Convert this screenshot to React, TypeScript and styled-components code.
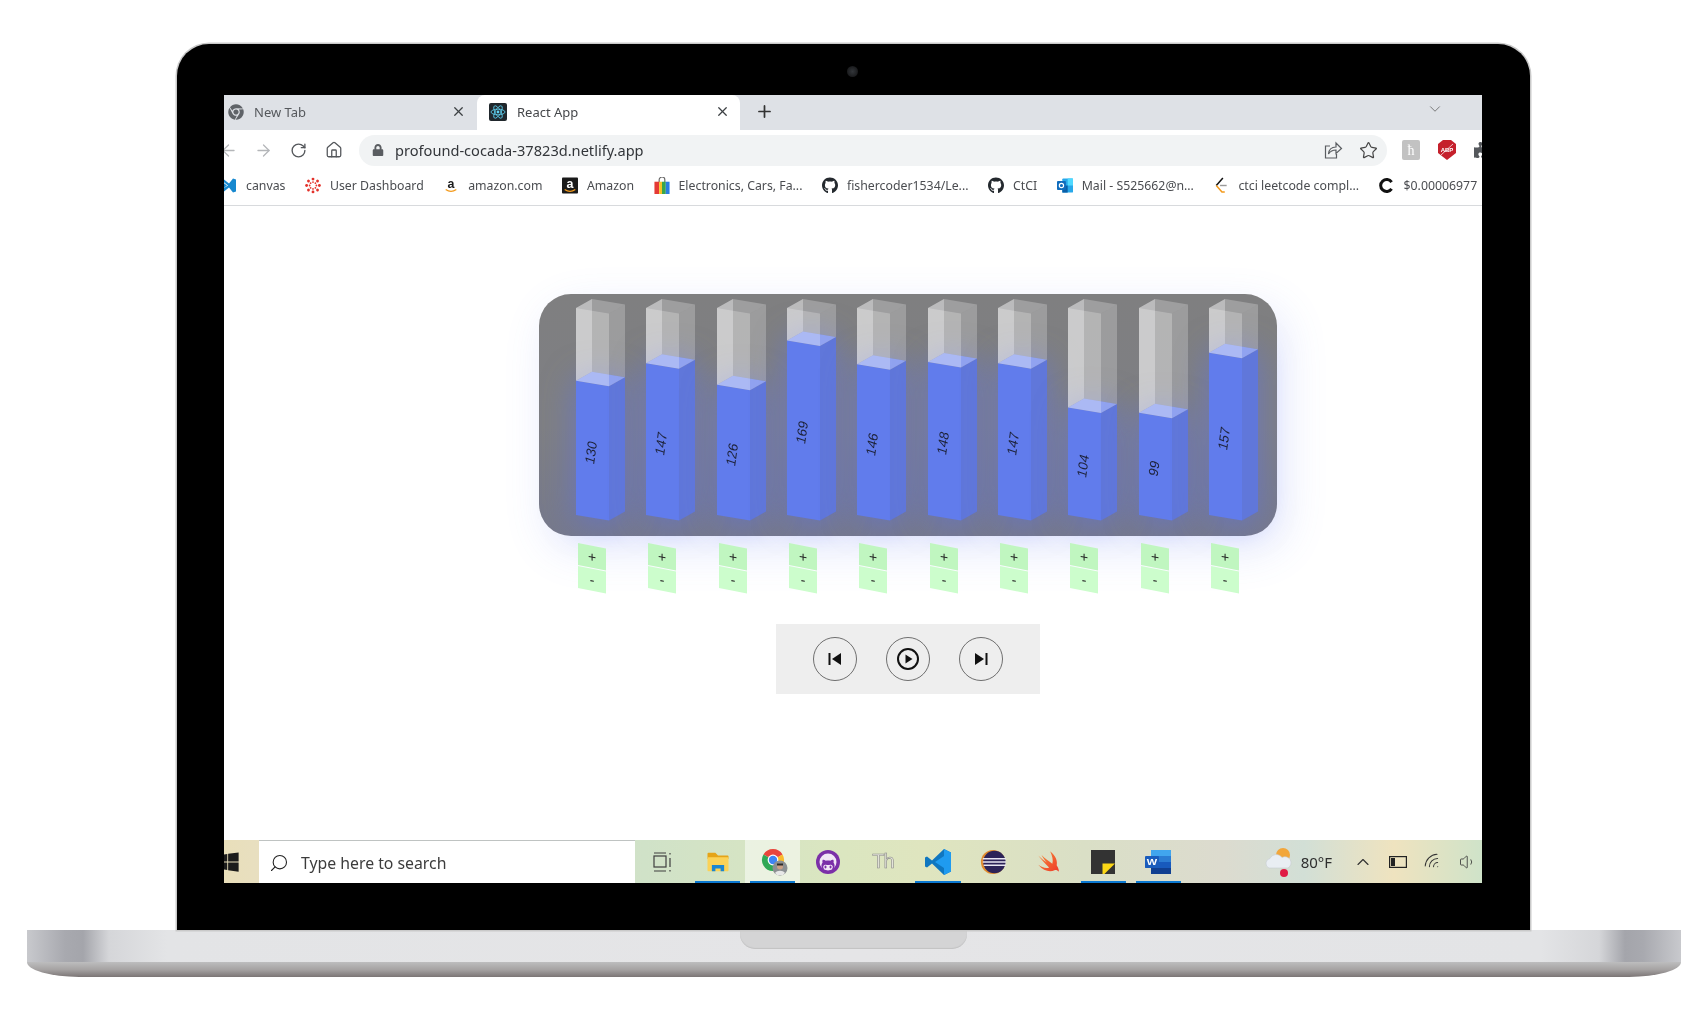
import React from "react";
import styled, { createGlobalStyle } from "styled-components";
import { ArrowLeft, ArrowRight, ChevronDown, ChevronUp, House, Plus, RotateCw, Search, Star, Volume1, Wifi, X } from "lucide-react";
import { FaChrome, FaGithub, FaGithubAlt, FaLock, FaPuzzlePiece, FaWindows } from "react-icons/fa";

const UI_FONT = `"Noto Sans", "Open Sans", sans-serif`;

const GlobalStyle = createGlobalStyle`
  html, body { margin: 0; padding: 0; background: #fff; }
  body { font-family: ${UI_FONT}; overflow: hidden; }
`;

const VALUES = [130, 147, 126, 169, 146, 148, 147, 104, 99, 157];

/* ---------- laptop ---------- */
const Page = styled.div`
  width: 1704px;
  height: 1025px;
  padding: 44px 0 0 3px;
  box-sizing: border-box;
  display: flex;
  flex-direction: column;
  align-items: center;
`;

const Lid = styled.div`
  position: relative;
  width: 1353px;
  height: 886px;
  box-sizing: border-box;
  padding: 51px 48px 47px 47px;
  background: #000;
  border-radius: 32px 32px 0 0;
  box-shadow: 0 0 0 1.5px #c9c9c9;
`;

const Camera = styled.div`
  position: absolute;
  left: 670px;
  top: 22px;
  width: 11px;
  height: 11px;
  border-radius: 50%;
  background: radial-gradient(circle at 50% 50%, #33363a, #1a1b1d 70%);
`;

const Screen = styled.div`
  width: 1258px;
  height: 788px;
  display: flex;
  flex-direction: column;
  overflow: hidden;
  background: #fff;
  filter: blur(0.35px);
`;

const Base = styled.div`
  width: 1654px;
  height: 47px;
  display: flex;
  flex-direction: column;
`;

const BaseTop = styled.div`
  height: 32px;
  display: flex;
  justify-content: center;
  background: linear-gradient(
    90deg,
    #c8c9cd 0,
    #a8a9af 38px,
    #a4a5ab 56px,
    #d5d6d9 82px,
    #e3e4e6 140px,
    #e5e5e7 50%,
    #e3e4e6 calc(100% - 140px),
    #d5d6d9 calc(100% - 82px),
    #a4a5ab calc(100% - 56px),
    #a8a9af calc(100% - 38px),
    #c8c9cd 100%
  );
`;

const Notch = styled.div`
  width: 227px;
  height: 19px;
  border-radius: 0 0 15px 15px;
  background: #d4d4d5;
  box-shadow: inset 0 -1px 1px #c2c2c3;
`;

const BaseBottom = styled.div`
  height: 15px;
  border-radius: 0 0 52px 52px / 0 0 15px 15px;
  background: linear-gradient(180deg, #bdbdbe 0, #a6a3a3 50%, #7b7575 100%);
`;

/* ---------- browser chrome ---------- */
const TabBar = styled.div`
  height: 35px;
  flex: none;
  display: flex;
  align-items: stretch;
  background: #dee1e6;
`;

const Tab = styled.div<{ $active?: boolean; $width: number; $inset: number }>`
  width: ${(p) => p.$width}px;
  box-sizing: border-box;
  padding: 0 10px 2px ${(p) => p.$inset}px;
  display: flex;
  align-items: center;
  gap: 10px;
  font-size: 13px;
  color: ${(p) => (p.$active ? "#45474a" : "#55585c")};
  background: ${(p) => (p.$active ? "#fff" : "transparent")};
  border-radius: 8px 8px 0 0;
  svg:last-child { margin-left: auto; }
`;

const NewTabButton = styled.div`
  width: 48px;
  display: flex;
  align-items: center;
  justify-content: center;
  color: #333;
  padding-bottom: 2px;
`;

const WindowChevron = styled.div`
  margin-left: auto;
  margin-right: 38px;
  padding-top: 5px;
  color: #555;
`;

const Toolbar = styled.div`
  height: 41px;
  box-sizing: border-box;
  padding-bottom: 1px;
  flex: none;
  display: flex;
  align-items: center;
  background: #fff;
`;

const NavSlot = styled.div<{ $faded?: boolean }>`
  width: 35px;
  flex: none;
  display: flex;
  justify-content: center;
  color: ${(p) => (p.$faded ? "#b4b6b9" : "#54575b")};
  &:first-child { margin-left: -13px; }
`;

const Omnibox = styled.div`
  width: 1028px;
  height: 31px;
  margin: 0 6px 0 8px;
  box-sizing: border-box;
  padding: 0 9px 0 13px;
  flex: none;
  display: flex;
  align-items: center;
  border-radius: 16px;
  background: #f1f3f4;
  color: #5a5d61;
`;

const Url = styled.span`
  margin-left: 11px;
  font-size: 14.6px;
  color: #33363a;
`;

const OmniActions = styled.div`
  margin-left: auto;
  display: flex;
  align-items: center;
  gap: 16px;
`;

const ExtensionSlot = styled.div`
  width: 36px;
  flex: none;
  display: flex;
  justify-content: center;
`;

const Bookmarks = styled.div`
  height: 34px;
  box-sizing: border-box;
  padding-bottom: 6px;
  flex: none;
  display: flex;
  align-items: center;
  gap: 19.5px;
  margin-left: -3px;
  white-space: nowrap;
`;

const BookmarkBarWrap = styled.div`
  flex: none;
  background: #fff;
  border-bottom: 1px solid #d8dadd;
  overflow: hidden;
`;

const Bookmark = styled.div`
  display: flex;
  align-items: center;
  gap: 9px;
  font-size: 12.3px;
  color: #4a4c50;
  svg { flex: none; width: 16px; height: 17px; }
`;

/* ---------- app under the browser ---------- */
const Content = styled.div`
  flex: 1;
  min-height: 0;
  padding: 88px 0 0 315px;
  background: #fff;
`;

const Stage = styled.div`
  width: 738px;
  display: flex;
  flex-direction: column;
`;

const Panel = styled.div`
  height: 242px;
  box-sizing: border-box;
  padding: 4px 0 0 37px;
  display: flex;
  border-radius: 32px;
  background: linear-gradient(180deg, #7f7f80 0, #7e7f84 55%, #76798c 100%);
  box-shadow: 8px 14px 44px rgba(96, 118, 240, 0.16);
`;

const BarSlot = styled.div`
  width: 70.33px;
  flex: none;
`;

const BarSvg = styled.svg`
  display: block;
  overflow: visible;
`;

const Liquid = styled.g`
  filter: drop-shadow(0 4px 16px rgba(86, 110, 250, 0.5));
`;

const BarLabel = styled.text`
  font-family: "Liberation Sans", Arial, sans-serif;
  font-size: 13.5px;
  fill: #1d2238;
`;

const StepperRow = styled.div`
  display: flex;
  padding: 7px 0 0 39px;
`;

const Stepper = styled.div`
  width: 70.33px;
  flex: none;
  display: flex;
  flex-direction: column;
  gap: 1px;
`;

const StepButton = styled.div<{ $tone: string }>`
  width: 28px;
  height: 22px;
  display: flex;
  align-items: center;
  justify-content: center;
  font-family: "Liberation Sans", Arial, sans-serif;
  font-size: 14px;
  color: #222;
  background: ${(p) => p.$tone};
  transform-origin: 0 0;
  transform: skewY(11deg);
`;

const Controls = styled.div`
  width: 264px;
  height: 70px;
  margin-top: 36px;
  align-self: center;
  display: flex;
  align-items: center;
  justify-content: center;
  gap: 29px;
  background: #eee;
`;

const RoundButton = styled.div`
  width: 44px;
  height: 44px;
  box-sizing: border-box;
  display: flex;
  align-items: center;
  justify-content: center;
  border: 1px solid #6f6f6f;
  border-radius: 50%;
`;

/* ---------- taskbar ---------- */
const Taskbar = styled.div`
  height: 43px;
  flex: none;
  display: flex;
  align-items: stretch;
  background: linear-gradient(
    90deg,
    #e9dfba 0,
    #e8dfc0 34px,
    #d0e2c8 420px,
    #dbe6c0 620px,
    #dfe5bf 700px,
    #dadfc6 860px,
    #dcdbcf 1000px,
    #d2dfd6 1080px,
    #efe3bf 1170px,
    #cfe3c9 1258px
  );
`;

const StartSlot = styled.div`
  width: 35px;
  flex: none;
  display: flex;
  align-items: center;
  color: #1c1c1c;
  svg { margin-left: -6px; }
`;

const SearchBox = styled.div`
  width: 376px;
  flex: none;
  box-sizing: border-box;
  padding: 2px 0 0 10px;
  display: flex;
  align-items: center;
  gap: 12px;
  background: #fff;
  border-top: 1px solid #bfc3c2;
  font-size: 15.8px;
  color: #3c3c3c;
  svg { transform: scaleX(-1); }
`;

const TaskIcon = styled.div<{ $running?: boolean; $focused?: boolean }>`
  position: relative;
  width: 55.1px;
  flex: none;
  display: flex;
  align-items: center;
  justify-content: center;
  background: ${(p) => (p.$focused ? "rgba(255,255,255,.5)" : "transparent")};
  ${(p) =>
    p.$running
      ? `&::after {
          content: "";
          position: absolute;
          left: 5px;
          right: 5px;
          bottom: 0;
          height: 2px;
          background: #0b78d0;
        }`
      : ""}
`;

const ThGlyph = styled.span`
  font-family: "Liberation Sans", sans-serif;
  font-size: 20px;
  letter-spacing: -1px;
  color: #e4e4da;
  -webkit-text-stroke: 0.6px #8a8a88;
`;

const Tray = styled.div`
  margin-left: auto;
  margin-right: -3px;
  display: flex;
  align-items: center;
`;

const TrayTemp = styled.span`
  margin: 0 13px 0 7px;
  font-size: 15px;
  color: #2e2e2e;
`;

const TrayIcon = styled.div`
  width: 35px;
  display: flex;
  justify-content: center;
  color: #333;
`;

/* ---------- drawn icons ---------- */
const ReactLogo = () => (
  <svg width="18" height="18" viewBox="0 0 18 18">
    <rect width="18" height="18" rx="2" fill="#20272c" />
    <g fill="none" stroke="#5fd3f3" strokeWidth=".8">
      <ellipse cx="9" cy="9" rx="7" ry="2.8" />
      <ellipse cx="9" cy="9" rx="7" ry="2.8" transform="rotate(60 9 9)" />
      <ellipse cx="9" cy="9" rx="7" ry="2.8" transform="rotate(120 9 9)" />
    </g>
    <circle cx="9" cy="9" r="1.4" fill="#5fd3f3" />
  </svg>
);

const CanvasMark = () => (
  <svg width="16" height="16" viewBox="0 0 16 16">
    <path d="M2 5l4 3-4 3zM3 2l5 4 4-5 3 1v12l-3 1-4-5-5 4-1-3 5-3-5-4z" fill="#1688cf" />
  </svg>
);

const RING_DOTS = [0, 45, 90, 135, 180, 225, 270, 315];

const DashboardMark = () => (
  <svg width="18" height="18" viewBox="0 0 18 18">
    {RING_DOTS.map((deg) => (
      <g key={deg} transform={`rotate(${deg} 9 9)`}>
        <circle cx="9" cy="1.8" r="1.6" fill="#e3322b" />
        <circle cx="9" cy="5.2" r="1" fill="#e3322b" />
      </g>
    ))}
  </svg>
);

const AmazonMark = ({ boxed }: { boxed?: boolean }) => (
  <svg width="18" height="18" viewBox="0 0 18 18">
    {boxed && <rect width="18" height="18" rx="1" fill="#1a1a1a" />}
    <text x="9" y="12" textAnchor="middle" fontSize="14" fontWeight="700" fontFamily="Liberation Sans" fill={boxed ? "#fff" : "#1a1a1a"}>
      a
    </text>
    <path d="M3 13.5c3.5 2.4 8.5 2.4 12 0" fill="none" stroke="#f39a1c" strokeWidth="1.5" />
  </svg>
);

const BagMark = () => (
  <svg width="16" height="18" viewBox="0 0 16 18">
    <path d="M5 6V3a3 3 0 0 1 6 0v3" fill="none" stroke="#666" strokeWidth="1.2" />
    <rect x="0" y="5" width="5" height="13" fill="#e53a35" />
    <rect x="5" y="5" width="3" height="13" fill="#f7c325" />
    <rect x="8" y="5" width="4" height="13" fill="#3aa64a" />
    <rect x="12" y="5" width="4" height="13" fill="#2a7de1" />
  </svg>
);

const OutlookMark = () => (
  <svg width="18" height="16" viewBox="0 0 18 16">
    <rect x="6" y="0" width="12" height="16" rx="1" fill="#28a8ea" />
    <rect x="12" y="0" width="6" height="8" fill="#50d9ff" />
    <rect x="6" y="8" width="6" height="8" fill="#0a5fa8" />
    <rect x="0" y="3" width="10" height="10" rx="1" fill="#0f6cbd" />
    <circle cx="5" cy="8" r="2.4" fill="none" stroke="#fff" strokeWidth="1.3" />
  </svg>
);

const LeetMark = () => (
  <svg width="16" height="18" viewBox="0 0 16 18">
    <path d="M10 1L3 9" fill="none" stroke="#111" strokeWidth="1.6" />
    <path d="M3 9l6 7h3" fill="none" stroke="#f39a1c" strokeWidth="1.6" />
    <path d="M7 9h7" stroke="#9a9a9a" strokeWidth="1.5" />
  </svg>
);

const CoinMark = () => (
  <svg width="16" height="16" viewBox="0 0 16 16">
    <path d="M12.6 4.6a6 6 0 1 0 0 6.8" fill="none" stroke="#111" strokeWidth="3" />
  </svg>
);

const ShareIcon = () => (
  <svg width="20" height="20" viewBox="0 0 20 20" fill="none" stroke="#5a5d61" strokeWidth="1.2">
    <path d="M7 6H2.5v12h11v-4" />
    <path d="M5.5 14c.4-4.4 3.4-7 7.5-7V3l5.5 5.5L13 13.5V10c-3 0-5.600 1-7.500 4z" />
  </svg>
);

const HistoryExtension = () => (
  <svg width="18" height="20" viewBox="0 0 18 20">
    <rect width="18" height="20" rx="2" fill="#c2c2c2" />
    <text x="9" y="15" textAnchor="middle" fontSize="14" fontFamily="Liberation Serif" fill="#fff">
      ћ
    </text>
  </svg>
);

const AdblockExtension = () => (
  <svg width="18" height="20" viewBox="0 0 18 20">
    <path d="M5 0h8l5 4v9l-9 7-9-7V4z" fill="#c5202c" />
    <text x="9" y="12" textAnchor="middle" fontSize="6" fontWeight="700" fontFamily="Liberation Sans" fill="#fff">
      ABP
    </text>
    <path d="M3 15L15 4" stroke="#fff" strokeWidth=".7" />
  </svg>
);

const TaskViewIcon = () => (
  <svg width="20" height="22" viewBox="0 0 20 22" fill="none" stroke="#3e3e3e" strokeWidth="1.2">
    <rect x="1" y="5" width="12" height="11" />
    <path d="M1 2h12M1 20h12M17 2v1.500M17 7v9M17 19v1.500" />
  </svg>
);

const ExplorerIcon = () => (
  <svg width="24" height="21" viewBox="0 0 26 24">
    <path d="M1 3a1 1 0 0 1 1-1h8l3 3h11a1 1 0 0 1 1 1v3H1z" fill="#e5a418" />
    <rect x="1" y="7" width="24" height="16" rx="1" fill="#fbd257" />
    <path d="M6 23v-7h14v7h-4v-3h-6v3z" fill="#1c86d1" />
  </svg>
);

const ChromeIcon = () => (
  <svg width="28" height="28" viewBox="0 0 28 28" style={{ marginLeft: 4 }}>
    <path d="M12 12L2.470 6.500A11 11 0 0 1 21.530 6.500Z" fill="#e8453c" />
    <path d="M12 12L21.530 6.500A11 11 0 0 1 12 23Z" fill="#f9bb2d" />
    <path d="M12 12L12 23A11 11 0 0 1 2.470 6.500Z" fill="#2fa855" />
    <circle cx="12" cy="12" r="5.400" fill="#fff" />
    <circle cx="12" cy="12" r="4.200" fill="#3f85f3" />
    <circle cx="19" cy="20" r="7.500" fill="#8b8f92" />
    <circle cx="19" cy="18.500" r="3" fill="#caa086" />
    <path d="M16 15.500h6v2h-6z" fill="#2c2a2a" />
    <path d="M14 25c2-3 8-3 10 0l-2 2h-6z" fill="#e8e8e8" />
  </svg>
);

const GithubDesktopIcon = () => (
  <svg width="26" height="26" viewBox="0 0 26 26">
    <circle cx="13" cy="13" r="12" fill="#7b2fa8" />
    <circle cx="13" cy="13" r="8.500" fill="#f2e6f6" />
    <foreignObject x="6" y="6" width="14" height="14">
      <FaGithubAlt size={14} color="#7b2fa8" />
    </foreignObject>
  </svg>
);

const VsCodeIcon = () => (
  <svg width="28" height="28" viewBox="0 0 28 28">
    <path d="M20 1l7 3.500v19L20 27 8 15.500 3 19.500 1 18.500v-9l2-1 5 4z" fill="#0f76c0" />
    <path d="M20 1l7 3.500v19L20 27zM20 8l-9 6 9 6z" fill="#1f9bf0" fillRule="evenodd" />
  </svg>
);

const EclipseIcon = () => (
  <svg width="26" height="26" viewBox="0 0 28 28">
    <circle cx="14" cy="14" r="13" fill="#e08a2e" />
    <circle cx="15.500" cy="14" r="12" fill="#2c2358" />
    <path d="M3 10.500h25M3 14h25M4 17.500h24" stroke="#e8e6f2" strokeWidth="1.600" />
  </svg>
);

const SwiftIcon = () => (
  <svg width="28" height="26" viewBox="0 0 24 24">
    <defs>
      <linearGradient id="swiftFill" x1="0" y1="0" x2="1" y2="1">
        <stop offset="0" stopColor="#f88a36" />
        <stop offset="1" stopColor="#ee3b2b" />
      </linearGradient>
    </defs>
    <path d="M14 2c5 4 7 9 6 13 2 3 2 5 2 6-1-1.500-3-2-4-1.500-4 2-10 1-15-5 3 2 7 4 10 2.500C9 13 5 9 3 6c3 3 6 5 8 6.500-2-2-4-5-5-7 3 3 7 6 10 8 1-3 0-7-2-11.500z" fill="url(#swiftFill)" />
  </svg>
);

const StickyIcon = () => (
  <svg width="24" height="24" viewBox="0 0 25 25">
    <rect width="25" height="25" fill="#333" />
    <path d="M12 25V14h13L14 25z" fill="#fbd716" />
  </svg>
);

const WordIcon = () => (
  <svg width="26" height="24" viewBox="0 0 26 28" preserveAspectRatio="none">
    <rect x="6" y="0" width="20" height="7" fill="#41a5ee" />
    <rect x="6" y="7" width="20" height="7" fill="#2b7cd3" />
    <rect x="6" y="14" width="20" height="7" fill="#185abd" />
    <rect x="6" y="21" width="20" height="7" fill="#103f91" />
    <rect x="0" y="7" width="14" height="14" rx="1" fill="#1a5cbc" />
    <text x="7" y="18" textAnchor="middle" fontSize="11" fontWeight="700" fontFamily="Liberation Sans" fill="#fff">
      W
    </text>
  </svg>
);

const WeatherIcon = () => (
  <svg width="30" height="32" viewBox="0 0 30 32">
    <circle cx="19" cy="9" r="7" fill="#f2a63a" />
    <path d="M5 22a5 5 0 0 1 1-9.500 7 7 0 0 1 12-1 6 6 0 0 1 6 10.500z" fill="#e9eef3" stroke="#c7ccd2" strokeWidth=".6" />
    <circle cx="20" cy="27" r="4" fill="#e01b45" />
  </svg>
);

const BatteryIcon = () => (
  <svg width="18" height="12" viewBox="0 0 18 12">
    <rect x=".6" y=".6" width="16.800" height="10.800" fill="none" stroke="#222" strokeWidth="1.200" />
    <rect x="2" y="2" width="4" height="8" fill="#222" />
  </svg>
);

const SkipBack = () => (
  <svg width="16" height="16" viewBox="0 0 16 16">
    <rect x="1.500" y="2" width="2" height="12" fill="#111" />
    <path d="M14 2v12L5 8z" fill="#111" />
  </svg>
);

const SkipForward = () => (
  <svg width="16" height="16" viewBox="0 0 16 16">
    <rect x="12.500" y="2" width="2" height="12" fill="#111" />
    <path d="M2 2v12l9-6z" fill="#111" />
  </svg>
);

const PlayCircle = () => (
  <svg width="24" height="24" viewBox="0 0 24 24">
    <circle cx="12" cy="12" r="10" fill="none" stroke="#111" strokeWidth="2" />
    <path d="M9.500 7.500v9l7-4.500z" fill="#111" />
  </svg>
);

/* ---------- 3d bar ---------- */
const FRONT_W = 33;
const SIDE_X = 16;
const SIDE_Y = 9;
const SHEAR = 5.5;
const GLASS_TOP = 10;
const FLOOR = 217;

const pts = (list: number[][]) => list.map((p) => p.join(",")).join(" ");
const front = (a: number, b: number) =>
  pts([[0, a], [FRONT_W, a + SHEAR], [FRONT_W, b + SHEAR], [0, b]]);
const right = (a: number, b: number) =>
  pts([
    [FRONT_W, a + SHEAR],
    [FRONT_W + SIDE_X, a + SHEAR - SIDE_Y],
    [FRONT_W + SIDE_X, b + SHEAR - SIDE_Y],
    [FRONT_W, b + SHEAR],
  ]);
const left = (a: number, b: number) =>
  pts([[0, a], [SIDE_X, a - SIDE_Y], [SIDE_X, b - SIDE_Y], [0, b]]);
const lid = (y: number) =>
  pts([[0, y], [FRONT_W, y + SHEAR], [FRONT_W + SIDE_X, y + SHEAR - SIDE_Y], [SIDE_X, y - SIDE_Y]]);

function Bar({ value }: { value: number }) {
  const level = FLOOR - value * 1.033;
  const labelY = (level + FLOOR) / 2 + 6;
  return (
    <BarSvg width="50" height="226" viewBox="0 0 50 226">
      <polygon points={pts([[SIDE_X, GLASS_TOP - SIDE_Y], [FRONT_W + SIDE_X, GLASS_TOP + SHEAR - SIDE_Y], [FRONT_W + SIDE_X, level + SHEAR - SIDE_Y], [SIDE_X, level - SIDE_Y]])} fill="rgba(255,255,255,.1)" />
      <polygon points={left(GLASS_TOP, level)} fill="rgba(255,255,255,.38)" />
      <Liquid>
        <polygon points={front(level, FLOOR)} fill="#617cec" />
        <polygon points={right(level, FLOOR)} fill="#6077da" />
        <polygon points={lid(level)} fill="#7f94ee" />
      </Liquid>
      <polygon points={front(GLASS_TOP, level)} fill="rgba(255,255,255,.35)" />
      <polygon points={right(GLASS_TOP, level)} fill="rgba(255,255,255,.14)" />
      <polygon points={lid(GLASS_TOP)} fill="rgba(255,255,255,.16)" />
      <BarLabel textAnchor="middle" transform={`translate(19.500 ${labelY}) rotate(-82) skewX(-10)`}>
        {value}
      </BarLabel>
    </BarSvg>
  );
}

const BOOKMARKS: { label: string; icon: React.ReactNode }[] = [
  { label: "canvas", icon: <CanvasMark /> },
  { label: "User Dashboard", icon: <DashboardMark /> },
  { label: "amazon.com", icon: <AmazonMark /> },
  { label: "Amazon", icon: <AmazonMark boxed /> },
  { label: "Electronics, Cars, Fa...", icon: <BagMark /> },
  { label: "fishercoder1534/Le...", icon: <FaGithub color="#24292e" /> },
  { label: "CtCI", icon: <FaGithub color="#24292e" /> },
  { label: "Mail - S525662@n...", icon: <OutlookMark /> },
  { label: "ctci leetcode compl...", icon: <LeetMark /> },
  { label: "$0.00006977", icon: <CoinMark /> },
];

export default function App() {
  return (
    <Page>
      <GlobalStyle />
      <Lid>
        <Camera />
        <Screen>
          <TabBar>
            <Tab $width={253} $inset={4}>
              <FaChrome size={16} color="#5f6368" />
              <span>New Tab</span>
              <X size={15} color="#3c4043" style={{ marginRight: 1 }} />
            </Tab>
            <Tab $active $width={263} $inset={12}>
              <ReactLogo />
              <span>React App</span>
              <X size={15} color="#3c4043" />
            </Tab>
            <NewTabButton>
              <Plus size={19} strokeWidth={2.2} />
            </NewTabButton>
            <WindowChevron>
              <ChevronDown size={18} strokeWidth={1} />
            </WindowChevron>
          </TabBar>

          <Toolbar>
            <NavSlot $faded>
              <ArrowLeft size={19} strokeWidth={1.6} />
            </NavSlot>
            <NavSlot $faded>
              <ArrowRight size={19} strokeWidth={1.6} />
            </NavSlot>
            <NavSlot>
              <RotateCw size={17} strokeWidth={1.9} />
            </NavSlot>
            <NavSlot>
              <House size={18} strokeWidth={1.7} />
            </NavSlot>
            <Omnibox>
              <FaLock size={12} />
              <Url>profound-cocada-37823d.netlify.app</Url>
              <OmniActions>
                <ShareIcon />
                <Star size={19} strokeWidth={1.5} color="#444" />
              </OmniActions>
            </Omnibox>
            <ExtensionSlot>
              <HistoryExtension />
            </ExtensionSlot>
            <ExtensionSlot>
              <AdblockExtension />
            </ExtensionSlot>
            <ExtensionSlot>
              <FaPuzzlePiece size={18} color="#55585c" />
            </ExtensionSlot>
          </Toolbar>

          <BookmarkBarWrap>
            <Bookmarks>
              {BOOKMARKS.map((b) => (
                <Bookmark key={b.label}>
                  {b.icon}
                  <span>{b.label}</span>
                </Bookmark>
              ))}
            </Bookmarks>
          </BookmarkBarWrap>

          <Content>
            <Stage>
              <Panel>
                {VALUES.map((v, i) => (
                  <BarSlot key={i}>
                    <Bar value={v} />
                  </BarSlot>
                ))}
              </Panel>
              <StepperRow>
                {VALUES.map((_, i) => (
                  <Stepper key={i}>
                    <StepButton $tone="#c0f6c0">+</StepButton>
                    <StepButton $tone="#ccfdcc">-</StepButton>
                  </Stepper>
                ))}
              </StepperRow>
              <Controls>
                <RoundButton>
                  <SkipBack />
                </RoundButton>
                <RoundButton>
                  <PlayCircle />
                </RoundButton>
                <RoundButton>
                  <SkipForward />
                </RoundButton>
              </Controls>
            </Stage>
          </Content>

          <Taskbar>
            <StartSlot>
              <FaWindows size={22} />
            </StartSlot>
            <SearchBox>
              <Search size={20} strokeWidth={1.3} color="#222" />
              <span>Type here to search</span>
            </SearchBox>
            <TaskIcon>
              <TaskViewIcon />
            </TaskIcon>
            <TaskIcon $running>
              <ExplorerIcon />
            </TaskIcon>
            <TaskIcon $running $focused>
              <ChromeIcon />
            </TaskIcon>
            <TaskIcon>
              <GithubDesktopIcon />
            </TaskIcon>
            <TaskIcon>
              <ThGlyph>Th</ThGlyph>
            </TaskIcon>
            <TaskIcon $running>
              <VsCodeIcon />
            </TaskIcon>
            <TaskIcon>
              <EclipseIcon />
            </TaskIcon>
            <TaskIcon>
              <SwiftIcon />
            </TaskIcon>
            <TaskIcon $running>
              <StickyIcon />
            </TaskIcon>
            <TaskIcon $running>
              <WordIcon />
            </TaskIcon>
            <Tray>
              <WeatherIcon />
              <TrayTemp>80°F</TrayTemp>
              <TrayIcon>
                <ChevronUp size={20} strokeWidth={1.4} />
              </TrayIcon>
              <TrayIcon>
                <BatteryIcon />
              </TrayIcon>
              <TrayIcon>
                <Wifi size={20} strokeWidth={1.2} style={{ transform: "rotate(-45deg)" }} />
              </TrayIcon>
              <TrayIcon>
                <Volume1 size={18} strokeWidth={1.1} />
              </TrayIcon>
            </Tray>
          </Taskbar>
        </Screen>
      </Lid>
      <Base>
        <BaseTop>
          <Notch />
        </BaseTop>
        <BaseBottom />
      </Base>
    </Page>
  );
}
